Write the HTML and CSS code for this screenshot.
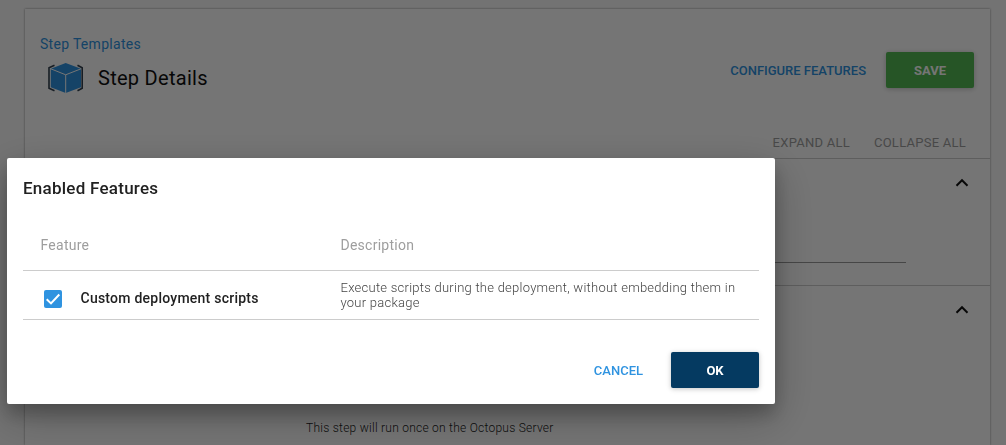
FILE: index.html
```html
<!DOCTYPE html>
<html lang="en">
<head>
<meta charset="utf-8">
<title>Step Details</title>
<link rel="stylesheet" href="styles.css">
</head>
<body>
<main class="card">
  <a class="breadcrumb">Step Templates</a>
  <header class="header">
    <svg class="logo" width="38" height="32" viewBox="0 0 38 32">
      <path fill="none" stroke="#33414f" stroke-width="1.600" d="M7.500 3.200 2 5.800v20.500l5.500 2.500M30.500 3.200 35.200 5.800v20.500l-4.700 2.500"/>
      <path fill="#2f93e0" d="M18.700 1 34 6.800v18.400L18.700 31 3.800 25.200V6.800z"/>
      <path fill="none" stroke="#fff" stroke-width="1" d="M3.800 6.800l14.900 6L34 6.800M18.700 12.800V31"/>
    </svg>
    <h1 class="title">Step Details</h1>
    <div class="actions">
      <button class="btn link configure">CONFIGURE FEATURES</button>
      <button class="btn raised save">SAVE</button>
    </div>
  </header>
  <div class="toggles"><span class="expand">EXPAND ALL</span><span class="collapse">COLLAPSE ALL</span></div>
  <section class="section name-section">
    <svg class="chevron" width="14" height="10" viewBox="0 0 14 10"><path d="M1.500 7.700 7 2.200l5.500 5.500"/></svg>
    <div class="field"></div>
  </section>
  <section class="section run-section">
    <svg class="chevron" width="14" height="10" viewBox="0 0 14 10"><path d="M1.500 7.700 7 2.200l5.500 5.500"/></svg>
    <p class="run-text">This step will run once on the Octopus Server</p>
  </section>
</main>
<div class="overlay">
  <div class="dialog" role="dialog">
    <h2 class="dialog-title">Enabled Features</h2>
    <div class="row head"><span class="col-feature">Feature</span><span class="col-desc">Description</span></div>
    <div class="row item">
      <div class="feature">
        <svg class="check" width="18" height="18" viewBox="0 0 18 18"><rect width="18" height="18" rx="2" fill="#2f93e0"/><path d="M2.700 9.200 7 13.400l8.300-8.900" fill="none" stroke="#fff" stroke-width="2"/></svg>
        <span class="feature-name">Custom deployment scripts</span>
      </div>
      <p class="desc">Execute scripts during the deployment, without embedding them in your package</p>
    </div>
    <footer class="dialog-actions">
      <button class="btn link cancel">CANCEL</button>
      <button class="btn raised ok">OK</button>
    </footer>
  </div>
</div>
</body>
</html>
```
FILE: styles.css
```css
* { box-sizing: border-box; }
body {
  margin: 0;
  height: 445px;
  padding: 9px 16px 0 25px;
  background: #fafafa;
  font-family: Roboto, sans-serif;
  color: #212121;
}
h1, h2, p { margin: 0; }
.card {
  height: 436px;
  background: #fff;
  box-shadow: 0 0 2px rgba(0, 0, 0, .45);
  padding-top: 27px;
}
.breadcrumb {
  display: block;
  padding-left: 15px;
  font-size: 14px;
  line-height: 16px;
  letter-spacing: .3px;
  color: #2f93e0;
}
.header { display: flex; height: 36px; align-items: center; padding: 0 16px 0 22px; }
.logo { margin-top: 16px; }
.title { margin: 16px 0 0 13px; font-size: 20px; line-height: 24px; font-weight: 400; letter-spacing: .28px; color: #111; }
.actions { display: flex; align-items: center; margin-left: auto; }
.btn {
  font-family: inherit;
  font-size: 13px;
  font-weight: 500;
  height: 36px;
  padding: 0;
  border: 0;
  background: none;
}
.link { color: #2f93e0; }
.configure { margin-right: 20px; }
.raised {
  width: 88px;
  border-radius: 2px;
  font-weight: 700;
  color: #fff;
  box-shadow: 0 1px 6px rgba(0, 0, 0, .12), 0 1px 4px rgba(0, 0, 0, .12);
}
.save { background: #54b954; }
.toggles {
  display: flex;
  justify-content: flex-end;
  gap: 24px;
  margin-top: 47px;
  padding-right: 24px;
  height: 23px;
  font-size: 13px;
  line-height: 15px;
  letter-spacing: .25px;
  color: #9e9e9e;
}
.section { border-top: 1px solid #ccc; display: flex; flex-direction: column; }
.chevron { align-self: flex-end; margin: 19px 21px 0 0; fill: none; stroke: #111; stroke-width: 2; }
.name-section { height: 127px; }
.field { margin: 74px 84px 0 281px; border-bottom: 1px solid #999; }
.run-text {
  margin: 106px 0 0 281px;
  font-size: 12px;
  line-height: 14px;
  font-weight: 300;
  letter-spacing: .25px;
}
.overlay {
  position: fixed;
  inset: 0;
  padding: 158px 0 0 7px;
  background: rgba(0, 0, 0, .54);
}
.dialog {
  width: 768px;
  height: 246px;
  padding: 20px 16px 16px;
  border-radius: 2px;
  background: #fff;
  box-shadow: 0 14px 45px rgba(0, 0, 0, .25), 0 10px 18px rgba(0, 0, 0, .22);
  display: flex;
  flex-direction: column;
}
.dialog-title { font-size: 17px; line-height: 20px; font-weight: 500; letter-spacing: .25px; }
.row { display: flex; border-bottom: 1px solid #ccc; }
.head { height: 73px; padding-top: 39px; font-size: 14px; line-height: 16px; color: #9e9e9e; letter-spacing: .25px; }
.col-feature { width: 300px; margin-left: 17.5px; }
.item { height: 49px; }
.feature { display: flex; width: 296.5px; margin-left: 21px; padding-top: 19px; }
.feature-name { margin: -1px 0 0 18.5px; font-size: 14px; line-height: 18px; font-weight: 500; letter-spacing: .24px; }
.desc { width: 405px; padding-top: 9px; font-size: 13px; line-height: 15px; font-weight: 300; letter-spacing: .25px; color: #444; }
.dialog-actions { display: flex; justify-content: flex-end; gap: 28px; margin-top: auto; }
.ok { background: #053a61; }
```
